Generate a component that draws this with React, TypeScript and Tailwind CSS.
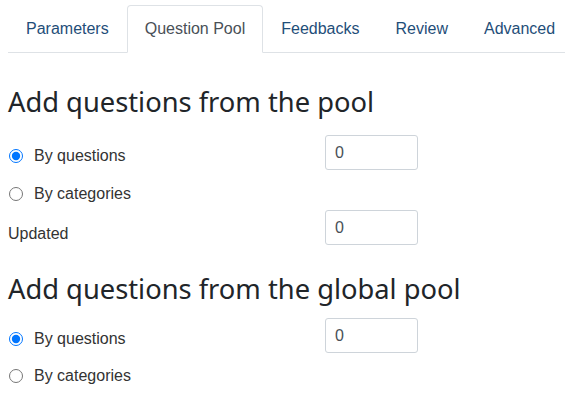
import React from "react";

const tabs = ["Parameters", "Question Pool", "Feedbacks", "Review", "Advanced"];

function Radio({ checked, label }: { checked?: boolean; label: string }) {
  return (
    <label className="flex items-center h-6 text-[16px] leading-6 text-[#333]">
      <input
        type="radio"
        checked={!!checked}
        readOnly
        className="ml-[1px] mr-[11px] w-[14px] h-[14px] accent-[#0075ff]"
      />
      <span>{label}</span>
    </label>
  );
}

function NumInput() {
  return (
    <div className="w-[93px] h-[35px] shrink-0 border border-[#ced4da] rounded-[3px] bg-white pl-[9px] flex items-center text-[16px] text-[#495057]">
      0
    </div>
  );
}

export default function App() {
  return (
    <div className="bg-white w-[565px] h-[412px] overflow-hidden pl-2" style={{ fontFamily: '"Liberation Sans", Arial, sans-serif' }}>
      <ul className="flex mt-[5px] border-b border-[#dee2e6] whitespace-nowrap">
        {tabs.map((t, i) => (
          <li
            key={t}
            className={
              "-mb-px shrink-0 px-[17px] py-[11px] text-[16px] leading-6 border rounded-t-[4px] " +
              (i === 1
                ? "border-[#dee2e6] border-b-white bg-white text-[#495057]"
                : "border-transparent text-[#1f4e79]")
            }
          >
            {t}
          </li>
        ))}
      </ul>
      <h2
        className="mt-[32px] text-[27.3px] leading-[34px] text-[#212529] font-normal"
        style={{ fontFamily: '"Noto Sans", "Open Sans", sans-serif' }}
      >
        Add questions from the pool
      </h2>
      <div className="mt-[16px] flex items-start">
        <div className="w-[317px] pt-[9px]">
          <Radio checked label="By questions" />
        </div>
        <NumInput />
      </div>
      <div className="mt-[12px]">
        <Radio label="By categories" />
      </div>
      <div className="mt-[4px] flex items-start">
        <div className="w-[317px] pt-[12px] text-[16px] leading-6 text-[#333]">Updated</div>
        <NumInput />
      </div>
      <h2
        className="mt-[26px] text-[27.3px] leading-[34px] text-[#212529] font-normal"
        style={{ fontFamily: '"Noto Sans", "Open Sans", sans-serif' }}
      >
        Add questions from the global pool
      </h2>
      <div className="mt-[12px] flex items-start">
        <div className="w-[317px] pt-[9px]">
          <Radio checked label="By questions" />
        </div>
        <NumInput />
      </div>
      <div className="mt-[11px]">
        <Radio label="By categories" />
      </div>
    </div>
  );
}
